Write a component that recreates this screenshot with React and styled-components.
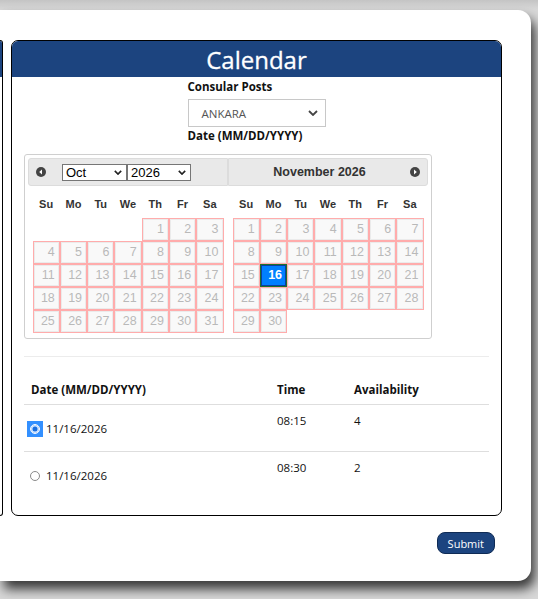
import React from 'react';
import styled, { createGlobalStyle } from 'styled-components';

const GlobalStyle = createGlobalStyle`
  html, body {
    margin: 0;
    padding: 0;
    background: #cfcfcf;
    overflow: hidden;
  }
  * { box-sizing: border-box; }
`;

const october = [
  [null, null, null, null, 1, 2, 3],
  [4, 5, 6, 7, 8, 9, 10],
  [11, 12, 13, 14, 15, 16, 17],
  [18, 19, 20, 21, 22, 23, 24],
  [25, 26, 27, 28, 29, 30, 31],
];

const november = [
  [1, 2, 3, 4, 5, 6, 7],
  [8, 9, 10, 11, 12, 13, 14],
  [15, 16, 17, 18, 19, 20, 21],
  [22, 23, 24, 25, 26, 27, 28],
  [29, 30, null, null, null, null, null],
];

const dayNames = ['Su', 'Mo', 'Tu', 'We', 'Th', 'Fr', 'Sa'];

const slots = [
  { date: '11/16/2026', time: '08:15', count: 4, checked: true },
  { date: '11/16/2026', time: '08:30', count: 2, checked: false },
];

const NavIcon = ({ dir }) => (
  <svg width="10" height="10" viewBox="0 0 10 10">
    <circle cx="5" cy="5" r="5" fill="#444" />
    {dir === 'prev' ? (
      <polygon points="6,2.5 3.2,5 6,7.5" fill="#fff" />
    ) : (
      <polygon points="4,2.5 6.8,5 4,7.5" fill="#fff" />
    )}
  </svg>
);

const Month = ({ weeks, active }) => (
  <DayTable>
    <thead>
      <tr>
        {dayNames.map((d) => (
          <DayName key={d}>{d}</DayName>
        ))}
      </tr>
    </thead>
    <tbody>
      {weeks.map((week, i) => (
        <tr key={i}>
          {week.map((day, j) =>
            day ? (
              <DayCell key={j} $active={day === active}>
                <DayLink $active={day === active}>{day}</DayLink>
              </DayCell>
            ) : (
              <EmptyCell key={j} />
            )
          )}
        </tr>
      ))}
    </tbody>
  </DayTable>
);

const App = () => {
  return (
    <>
      <GlobalStyle />
      <Screen>
        <Card>
          <PanelRow>
            <SidePanel>
              <PanelHeader />
            </SidePanel>
            <MainColumn>
              <CalendarPanel>
                <PanelHeader>
                  <HeaderTitle>Calendar</HeaderTitle>
                </PanelHeader>
                <PanelBody>
                  <FieldBlock>
                    <FieldLabel>Consular Posts</FieldLabel>
                    <PostSelect>
                      <span>ANKARA</span>
                      <Chevron viewBox="0 0 10 6">
                        <polyline points="1,1 5,5 9,1" />
                      </Chevron>
                    </PostSelect>
                    <FieldLabel>Date (MM/DD/YYYY)</FieldLabel>
                  </FieldBlock>

                  <Picker>
                    <MonthGroup>
                      <MonthHeader $side="left">
                        <NavIcon dir="prev" />
                        <MiniSelects>
                          <MiniSelect $w={65}>
                            Oct
                            <MiniChevron viewBox="0 0 10 6">
                              <polyline points="1,1 5,5 9,1" />
                            </MiniChevron>
                          </MiniSelect>
                          <MiniSelect $w={64}>
                            2026
                            <MiniChevron viewBox="0 0 10 6">
                              <polyline points="1,1 5,5 9,1" />
                            </MiniChevron>
                          </MiniSelect>
                        </MiniSelects>
                      </MonthHeader>
                      <Month weeks={october} />
                    </MonthGroup>
                    <MonthGroup>
                      <MonthHeader $side="right">
                        <MonthTitle>November 2026</MonthTitle>
                        <NavIcon dir="next" />
                      </MonthHeader>
                      <Month weeks={november} active={16} />
                    </MonthGroup>
                  </Picker>

                  <Divider />

                  <SlotTable>
                    <thead>
                      <tr>
                        <SlotHead $w={246}>Date (MM/DD/YYYY)</SlotHead>
                        <SlotHead $w={77}>Time</SlotHead>
                        <SlotHead>Availability</SlotHead>
                      </tr>
                    </thead>
                    <tbody>
                      {slots.map((s, i) => (
                        <SlotRow key={i} $last={i === slots.length - 1}>
                          <DateCell>
                            <DateWrap>
                              <Radio $checked={s.checked}>
                                <RadioDot $checked={s.checked} />
                              </Radio>
                              {s.date}
                            </DateWrap>
                          </DateCell>
                          <SlotCell>{s.time}</SlotCell>
                          <SlotCell>{s.count}</SlotCell>
                        </SlotRow>
                      ))}
                    </tbody>
                  </SlotTable>
                </PanelBody>
              </CalendarPanel>
              <SubmitRow>
                <SubmitButton>Submit</SubmitButton>
              </SubmitRow>
            </MainColumn>
          </PanelRow>
        </Card>
      </Screen>
    </>
  );
};

const Screen = styled.div`
  width: 538px;
  height: 599px;
  padding-top: 10px;
  background: linear-gradient(#c4c4c4, #d8d8d8 9px);
`;

const Card = styled.div`
  width: 531px;
  height: 571px;
  background: #fff;
  border-radius: 0 13px 13px 0;
  box-shadow: 4px 8px 12px rgba(0, 0, 0, 0.75);
  padding-top: 30px;
  font-family: 'Open Sans', 'Noto Sans', sans-serif;
  color: #111;
`;

const PanelRow = styled.div`
  display: flex;
  gap: 8px;
  align-items: flex-start;
`;

const SidePanel = styled.div`
  width: 3px;
  height: 476px;
  border: 1px solid #000;
  border-left: none;
  border-radius: 0 6px 6px 0;
  overflow: hidden;
`;

const MainColumn = styled.div`
  display: flex;
  flex-direction: column;
  width: 491px;
`;

const CalendarPanel = styled.div`
  height: 476px;
  border: 1px solid #000;
  border-radius: 7px;
  overflow: hidden;
`;

const PanelHeader = styled.div`
  height: 36px;
  background: #1c447f;
  display: flex;
  align-items: center;
  justify-content: center;
`;

const HeaderTitle = styled.h1`
  margin: 0;
  color: #fff;
  font-size: 24px;
  font-weight: 400;
  line-height: 36px;
  padding-top: 2px;
  -webkit-text-stroke: 0.3px #fff;
`;

const PanelBody = styled.div`
  padding: 2px 12px 0 12px;
`;

const FieldBlock = styled.div`
  width: 138px;
  margin: 0 auto;
  display: flex;
  flex-direction: column;
`;

const FieldLabel = styled.div`
  font-size: 11.5px;
  font-weight: 700;
  line-height: 16px;
  white-space: nowrap;
`;

const PostSelect = styled.div`
  margin: 4px 0 1px;
  height: 28px;
  border: 1px solid #c8c8c8;
  display: flex;
  align-items: center;
  justify-content: space-between;
  padding: 0 7px 0 13px;
  font-size: 11.5px;
  color: #555;
`;

const Chevron = styled.svg`
  width: 10px;
  height: 6px;
  fill: none;
  stroke: #444;
  stroke-width: 1.8;
`;

const Picker = styled.div`
  margin-top: 10px;
  width: 408px;
  height: 185px;
  border: 1px solid #cfcfcf;
  border-radius: 3px;
  padding: 3px;
  display: flex;
  font-family: 'Liberation Sans', Arial, sans-serif;
`;

const MonthGroup = styled.div`
  width: 200px;
  display: flex;
  flex-direction: column;
  align-items: center;
`;

const MonthHeader = styled.div`
  width: 100%;
  height: 28px;
  flex-shrink: 0;
  background: #e9e9e9;
  border: 1px solid #dcdcdc;
  border-radius: ${(p) => (p.$side === 'left' ? '3px 0 0 3px' : '0 3px 3px 0')};
  display: flex;
  align-items: center;
  padding: ${(p) => (p.$side === 'left' ? '0 0 0 7px' : '0 7px 0 0')};
  gap: 16px;
`;

const MiniSelects = styled.div`
  display: flex;
`;

const MiniSelect = styled.div`
  width: ${(p) => p.$w}px;
  height: 17px;
  border: 1px solid #767676;
  background: #fff;
  font-size: 13px;
  line-height: 15px;
  padding-left: 3px;
  display: flex;
  align-items: center;
  justify-content: space-between;
  padding-right: 4px;
  color: #000;
`;

const MiniChevron = styled.svg`
  width: 8px;
  height: 5px;
  fill: none;
  stroke: #222;
  stroke-width: 2;
`;

const MonthTitle = styled.div`
  flex: 1;
  text-align: center;
  font-weight: 700;
  font-size: 12.5px;
  color: #333;
  padding-left: 16px;
`;

const DayTable = styled.table`
  width: 191px;
  table-layout: fixed;
  border-collapse: separate;
  border-spacing: 0;
  margin-top: 3px;
`;

const DayName = styled.th`
  height: 29px;
  padding: 0;
  font-size: 11px;
  font-weight: 700;
  color: #333;
  text-align: center;
  vertical-align: middle;
`;

const DayCell = styled.td`
  padding: 0;
  border: 1px solid ${(p) => (p.$active ? '#1f6f2a' : '#ffacac')};
`;

const EmptyCell = styled.td`
  padding: 0;
`;

const DayLink = styled.span`
  display: block;
  border: 1px solid ${(p) => (p.$active ? '#0b3fa0' : '#ebebeb')};
  background: ${(p) => (p.$active ? '#007fff' : '#f9f9f9')};
  color: ${(p) => (p.$active ? '#fff' : '#b9b9b9')};
  font-weight: ${(p) => (p.$active ? 700 : 400)};
  font-size: 12.5px;
  line-height: 15px;
  padding: 2px 3px 2px 0;
  text-align: right;
`;

const Divider = styled.div`
  margin-top: 17px;
  width: 465px;
  height: 1px;
  background: #ececec;
`;

const SlotTable = styled.table`
  margin-top: 19px;
  width: 465px;
  border-collapse: collapse;
  font-size: 11.5px;
`;

const SlotHead = styled.th`
  width: ${(p) => (p.$w ? `${p.$w}px` : 'auto')};
  text-align: left;
  font-weight: 700;
  padding: 6px 7px;
  line-height: 16px;
  border-bottom: 1px solid #dedede;
`;

const SlotRow = styled.tr`
  border-bottom: ${(p) => (p.$last ? 'none' : '1px solid #dedede')};
`;

const SlotCell = styled.td`
  vertical-align: top;
  padding: 8px 7px 0;
  line-height: 16px;
`;

const DateCell = styled.td`
  vertical-align: top;
  padding: 16px 0 14px 3px;
  line-height: 16px;
  white-space: nowrap;
`;

const DateWrap = styled.div`
  display: flex;
  align-items: center;
  height: 16px;
`;

const Radio = styled.span`
  display: inline-flex;
  align-items: center;
  justify-content: center;
  width: 16px;
  height: 16px;
  margin-right: 3px;
  background: ${(p) => (p.$checked ? '#3390ff' : 'transparent')};
`;

const RadioDot = styled.span`
  width: 10px;
  height: 10px;
  border-radius: 50%;
  border: 1px solid ${(p) => (p.$checked ? '#fff' : '#8a8a8a')};
  background: ${(p) => (p.$checked ? '#1a6fe0' : '#fff')};
  box-shadow: ${(p) => (p.$checked ? 'inset 0 0 0 1.5px #cfe4ff' : 'none')};
`;

const SubmitRow = styled.div`
  display: flex;
  justify-content: flex-end;
  padding: 16px 7px 0 0;
`;

const SubmitButton = styled.button`
  height: 22px;
  padding: 0 10px;
  border: 1px solid #0f2b55;
  border-radius: 8px;
  background: #1c447f;
  color: #fff;
  font-family: 'Open Sans', 'Noto Sans', sans-serif;
  font-size: 11px;
`;

export default App;
